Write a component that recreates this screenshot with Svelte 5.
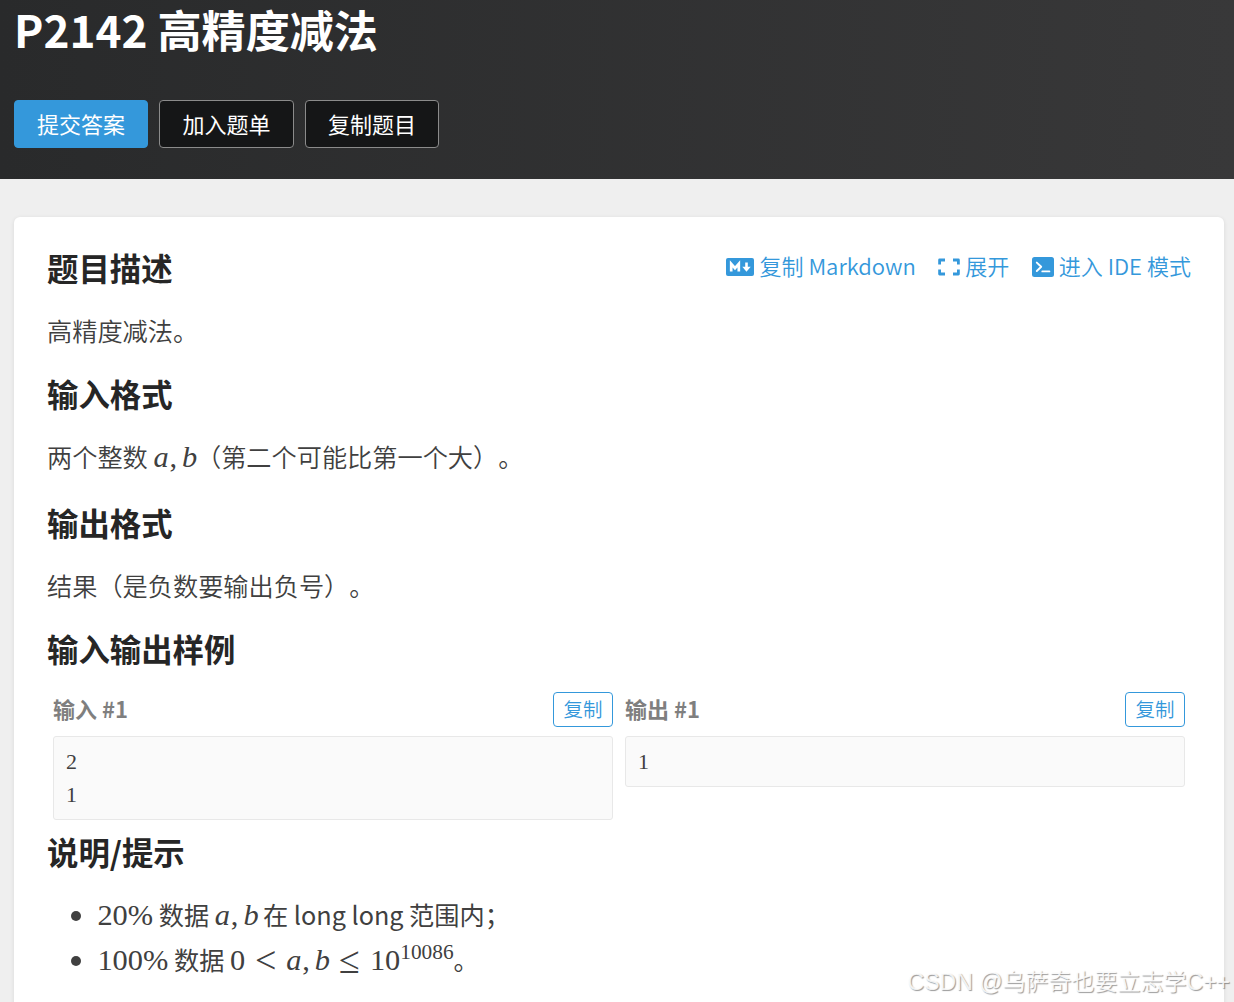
<script>
  const samples = [{ id: 1, input: '2\n1', output: '1' }];
</script>

{#snippet vars()}
  <span class="var-a">a</span><span class="comma">,</span><span class="var-b">b</span>
{/snippet}

<header class="header">
  <h1 class="title">P2142 高精度减法</h1>
  <div class="actions">
    <button class="btn btn--primary">提交答案</button>
    <button class="btn">加入题单</button>
    <button class="btn">复制题目</button>
  </div>
</header>

<main class="main">
  <article class="card">
    <div class="card-top">
      <h2>题目描述</h2>
      <nav class="links">
        <a href="#markdown">
          <svg class="icon-md" viewBox="0 0 28 18" aria-hidden="true">
            <rect width="28" height="18" rx="2" fill="currentColor" />
            <path d="M5.2 13.4V5.8L9 10.2L12.8 5.8V13.4" fill="none" stroke="#fff" stroke-width="2.7" />
            <path d="M20.5 4.5V11" fill="none" stroke="#fff" stroke-width="2.6" />
            <path d="M16.3 8.8H24.7L20.5 13.8Z" fill="#fff" />
          </svg>
          <span>复制 Markdown</span>
        </a>
        <a href="#expand">
          <svg class="icon-expand" viewBox="0 0 22 18" aria-hidden="true">
            <path d="M7 2H1.6V6.4M15 2H20.4V6.4M1.6 11.6V16H7M20.4 11.6V16H15" fill="none" stroke="currentColor" stroke-width="2.8" stroke-linejoin="round" />
          </svg>
          <span>展开</span>
        </a>
        <a href="#ide">
          <svg class="icon-ide" viewBox="0 0 22 20" aria-hidden="true">
            <rect width="22" height="20" rx="2.5" fill="currentColor" />
            <path d="M4.8 5.6L9.2 9.8L4.8 14M10.3 14.4H17.4" fill="none" stroke="#fff" stroke-width="1.9" stroke-linecap="round" stroke-linejoin="round" />
          </svg>
          <span>进入 IDE 模式</span>
        </a>
      </nav>
    </div>
    <p>高精度减法。</p>

    <h2>输入格式</h2>
    <p class="has-math">两个整数 <span class="math">{@render vars()}</span>（第二个可能比第一个大）。</p>

    <h2>输出格式</h2>
    <p>结果（是负数要输出负号）。</p>

    <h2 class="sample-heading">输入输出样例</h2>
    {#each samples as sample (sample.id)}
      <div class="samples">
        <section>
          <div class="sample-head">
            <h3>输入 #{sample.id}</h3>
            <button class="copy">复制</button>
          </div>
          <pre>{sample.input}</pre>
        </section>
        <section>
          <div class="sample-head">
            <h3>输出 #{sample.id}</h3>
            <button class="copy">复制</button>
          </div>
          <pre>{sample.output}</pre>
        </section>
      </div>
    {/each}

    <h2>说明/提示</h2>
    <ul>
      <li><span class="math">20%</span> 数据 <span class="math">{@render vars()}</span> 在 long long 范围内；</li>
      <li><span class="math">100%</span> 数据 <span class="math">0<span class="rel">&lt;</span>{@render vars()}<span class="rel">≤</span>10<sup>10086</sup></span>。</li>
    </ul>
  </article>
</main>

<div class="watermark">CSDN @乌萨奇也要立志学C++</div>

<style>
  :global(body) {
    background: #efefef;
    font-family: "Noto Sans CJK SC", sans-serif;
    color: #404040;
    height: 1002px;
    overflow: hidden;
    text-spacing-trim: space-all;
  }

  .header {
    box-sizing: border-box;
    height: 179px;
    padding: 0 14px;
    background: linear-gradient(to right, #292a2b, #383839);
  }

  .title {
    margin: 0;
    height: 100px;
    line-height: 59px;
    font-size: 44.1px;
    font-weight: 700;
    color: #fff;
  }

  .actions {
    display: flex;
    gap: 11.3px;
  }

  .btn {
    box-sizing: border-box;
    width: 134.2px;
    height: 48px;
    padding: 0 0 2px;
    border: 1px solid #8b8b8b;
    border-radius: 4px;
    background: #151617;
    color: #fff;
    font: 22px/44px "Noto Sans CJK SC", sans-serif;
  }

  .btn--primary {
    border-color: #3498db;
    background: #3498db;
  }

  .main {
    padding: 38px 10px 0 14px;
  }

  .card {
    box-sizing: border-box;
    height: 820px;
    padding: 29px 33px;
    border-radius: 6px;
    background: #fff;
    box-shadow: 0 1px 4px rgba(26, 26, 26, 0.1);
  }

  .card-top {
    display: flex;
    justify-content: space-between;
  }

  h2 {
    margin: 0 0 17px;
    font-size: 31.4px;
    line-height: 44px;
    font-weight: 700;
    color: #262626;
  }

  p {
    margin: 0 0 19px;
    height: 46px;
    line-height: 46px;
    font-size: 25.2px;
    font-weight: 350;
  }

  p.has-math {
    margin-bottom: 22px;
  }

  .links {
    display: flex;
    gap: 22.4px;
    height: 38px;
  }

  .links a {
    display: flex;
    align-items: center;
    gap: 5px;
    font-size: 22.05px;
    font-weight: 350;
    line-height: 38px;
    color: #3498db;
    text-decoration: none;
  }

  .links svg {
    margin-top: 4px;
  }

  .icon-md {
    width: 28px;
    height: 18px;
  }

  .icon-expand {
    width: 22px;
    height: 18px;
  }

  .icon-ide {
    width: 22px;
    height: 20px;
  }

  h2.sample-heading {
    margin-bottom: 21px;
  }

  .samples {
    display: grid;
    grid-template-columns: 1fr 1fr;
    align-items: start;
    gap: 12px;
    padding: 0 6px;
    margin-bottom: 10px;
  }

  .sample-head {
    display: flex;
    justify-content: space-between;
    align-items: center;
    height: 35px;
    margin-bottom: 9px;
  }

  h3 {
    margin: 0;
    padding-bottom: 2px;
    font-size: 22px;
    line-height: 33px;
    font-weight: 700;
    color: #7f7f7f;
  }

  .copy {
    box-sizing: border-box;
    width: 60px;
    height: 35px;
    padding: 0 0 1px;
    border: 1px solid #3498db;
    border-radius: 4px;
    background: #fff;
    color: #3498db;
    font: 350 19.5px/32px "Noto Sans CJK SC", sans-serif;
  }

  pre {
    margin: 0;
    padding: 8px 12px;
    border: 1px solid #e8e8e8;
    border-radius: 3px;
    background: #fafafa;
    font: 22px/33px "Liberation Serif", serif;
  }

  ul {
    margin: 0;
    padding: 1px 0 0 50.4px;
    font-size: 25.2px;
  }

  li {
    height: 45px;
    line-height: 45px;
  }

  .math {
    font-family: "Liberation Serif", serif;
    font-size: 30.4px;
    line-height: 1;
    white-space: nowrap;
  }

  .var-a,
  .var-b {
    display: inline-block;
    width: 16px;
    font-style: italic;
  }

  .var-b {
    width: 14px;
  }

  .comma {
    margin-right: 5px;
  }

  .rel {
    display: inline-block;
    width: 23.7px;
    margin: 0 8.7px;
    text-align: center;
    font-size: 38px;
    line-height: 0;
    vertical-align: -3px;
  }

  sup {
    font-size: 21.3px;
    line-height: 0;
    vertical-align: 11px;
  }

  .watermark {
    position: absolute;
    right: 4px;
    top: 966px;
    font: 350 23px/32px "Liberation Sans", "Noto Sans CJK SC", sans-serif;
    color: rgba(255, 255, 255, 0.85);
    text-shadow: 1px 1px 1px rgba(0, 0, 0, 0.4);
    white-space: nowrap;
  }
</style>
